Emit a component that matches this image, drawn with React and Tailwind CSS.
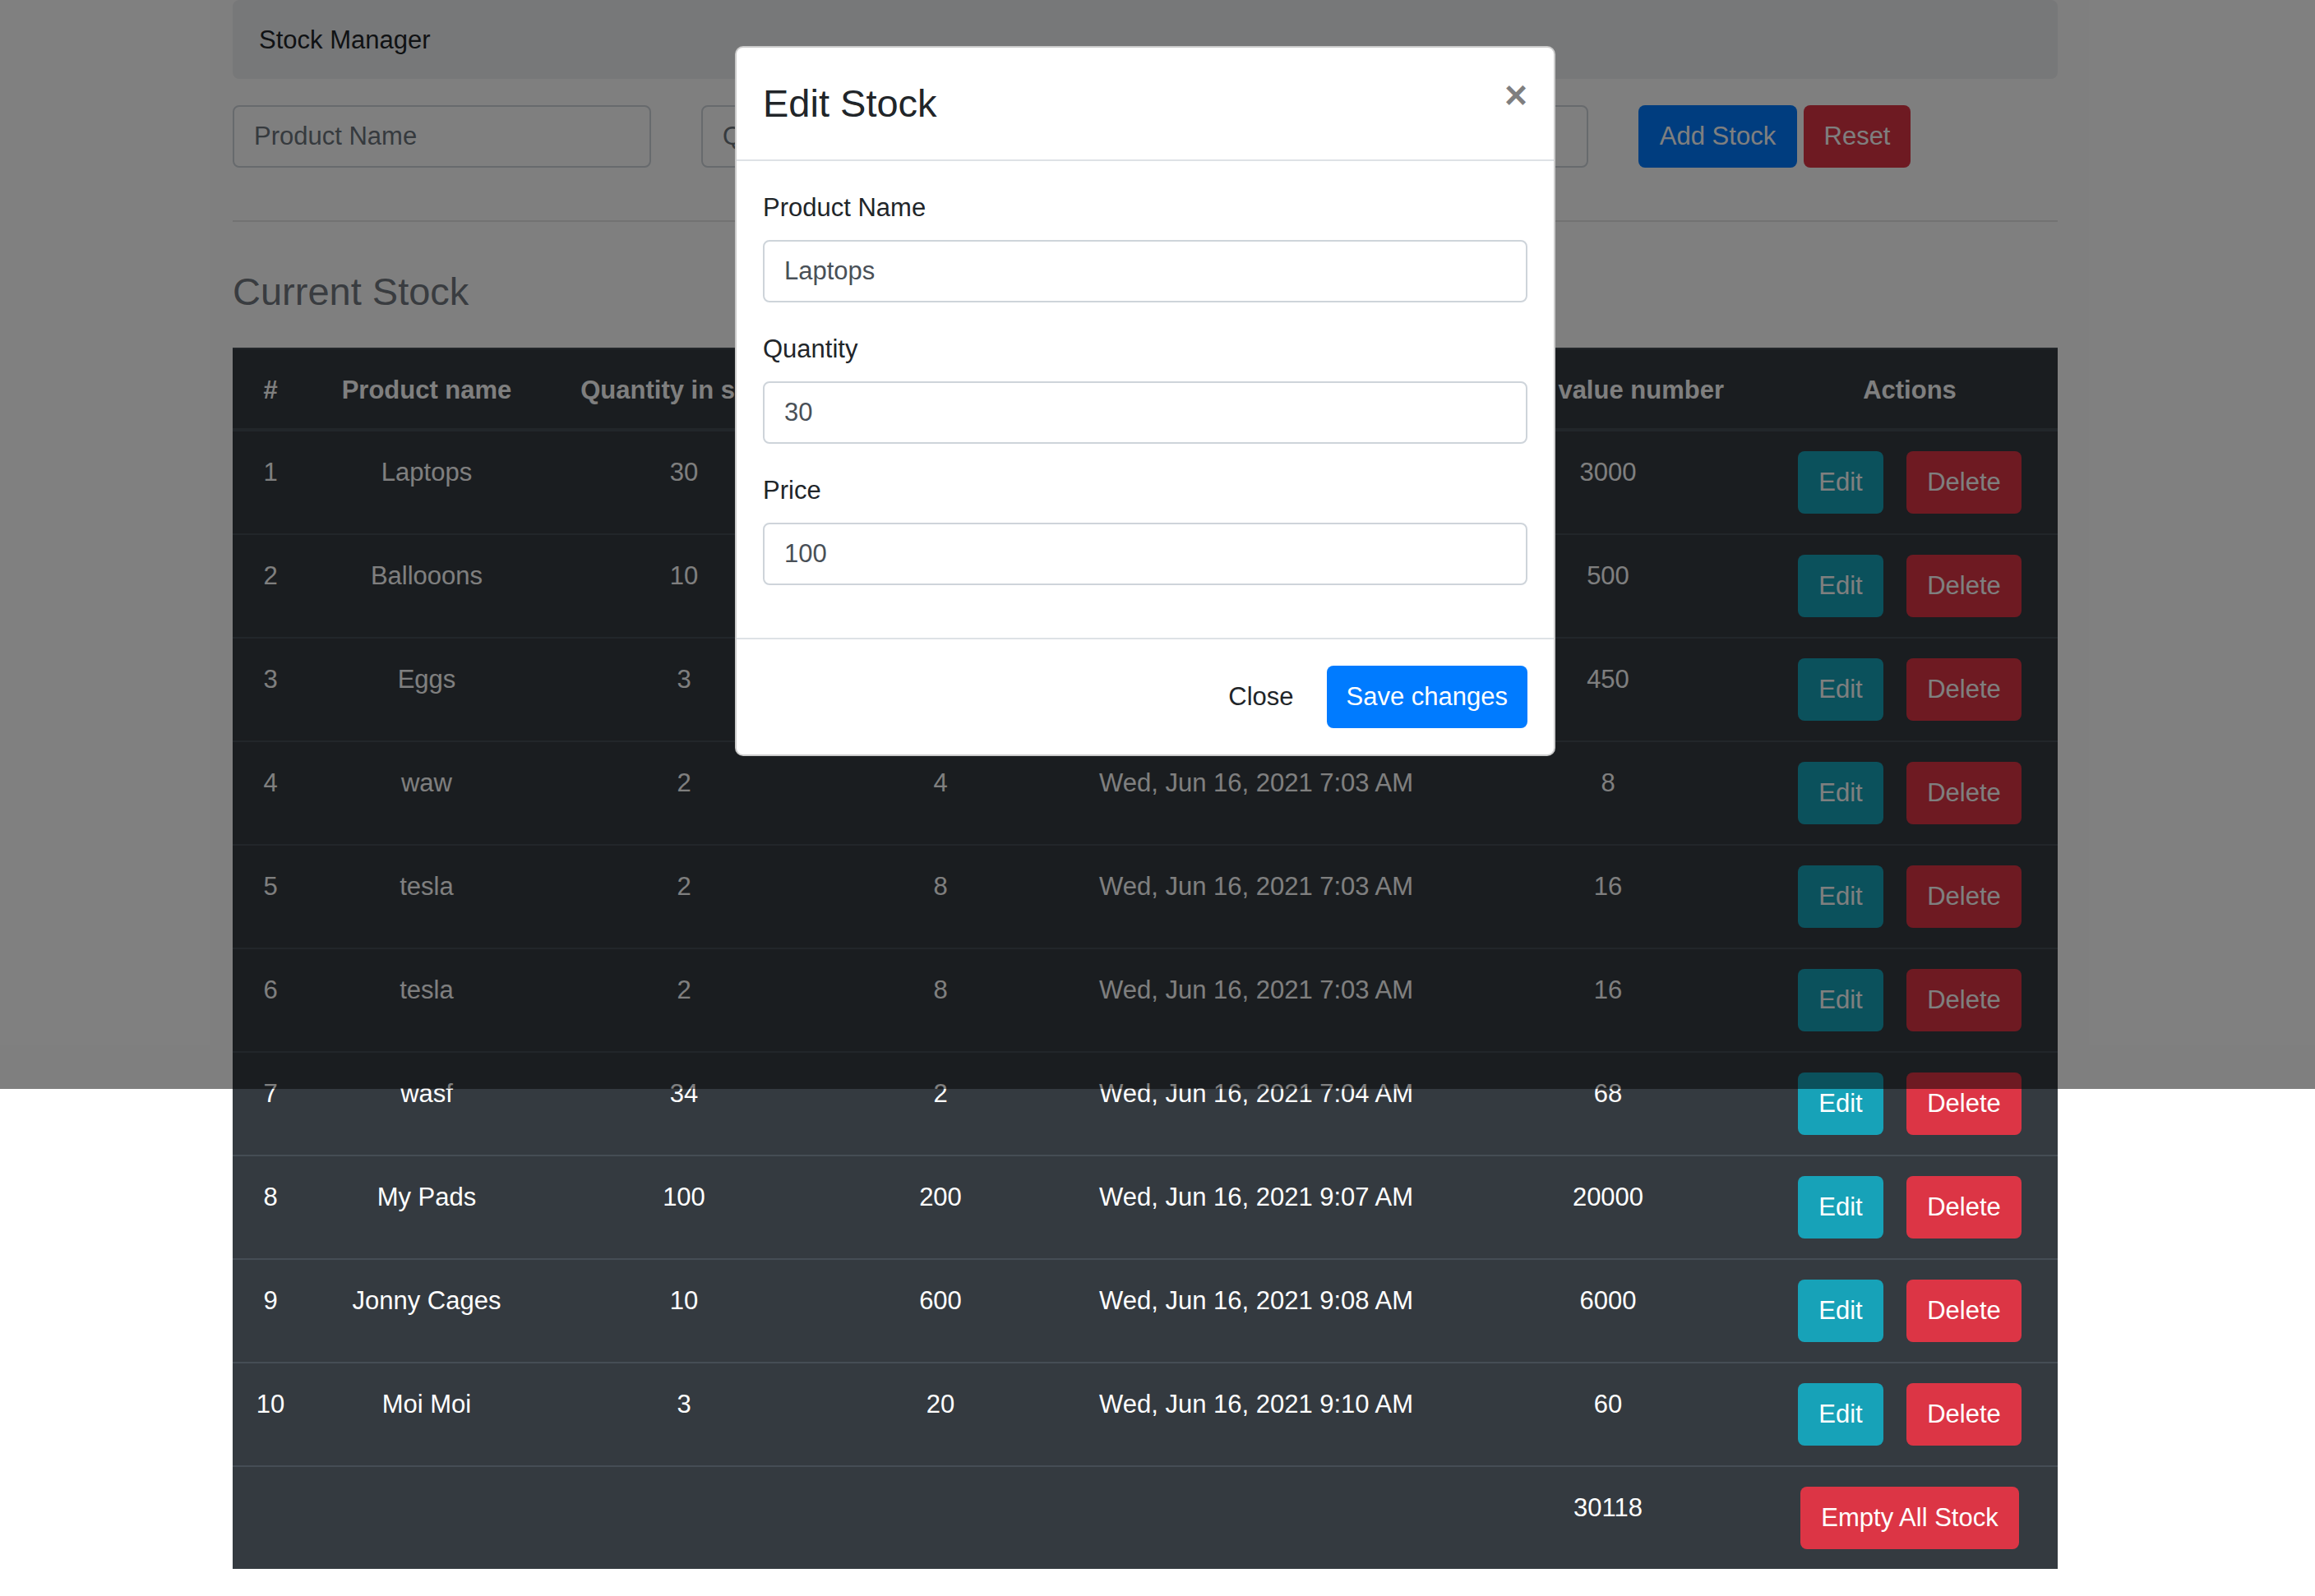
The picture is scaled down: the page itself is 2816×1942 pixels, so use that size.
import React from "react";

const ROWS = [
  [1, "Laptops", 30, 100, "Wed, Jun 16, 2021 7:02 AM", 3000],
  [2, "Ballooons", 10, 50, "Wed, Jun 16, 2021 7:02 AM", 500],
  [3, "Eggs", 3, 150, "Wed, Jun 16, 2021 7:03 AM", 450],
  [4, "waw", 2, 4, "Wed, Jun 16, 2021 7:03 AM", 8],
  [5, "tesla", 2, 8, "Wed, Jun 16, 2021 7:03 AM", 16],
  [6, "tesla", 2, 8, "Wed, Jun 16, 2021 7:03 AM", 16],
  [7, "wasf", 34, 2, "Wed, Jun 16, 2021 7:04 AM", 68],
  [8, "My Pads", 100, 200, "Wed, Jun 16, 2021 9:07 AM", 20000],
  [9, "Jonny Cages", 10, 600, "Wed, Jun 16, 2021 9:08 AM", 6000],
  [10, "Moi Moi", 3, 20, "Wed, Jun 16, 2021 9:10 AM", 60],
];

const HEADERS = ["#", "Product name", "Quantity in stock", "Price", "Date added", "Total value number", "Actions"];
const COL_WIDTHS = ["w-[92px]", "w-[288px]", "w-[338px]", "w-[286px]", "w-[482px]", "w-[374px]", "w-[360px]"];

function Btn({ className = "", children }) {
  return (
    <button
      type="button"
      className={`inline-flex h-[76px] items-center justify-center rounded-[8px] px-[24px] text-[31px] leading-[48px] ${className}`}
    >
      {children}
    </button>
  );
}

function PageInput({ placeholder }) {
  return (
    <input
      placeholder={placeholder}
      className="h-[76px] w-[509px] rounded-[8px] border-2 border-[#ced4da] bg-white px-[24px] text-[31px] text-[#495057] placeholder:text-[#6c757d] outline-none"
    />
  );
}

function Field({ label, value }) {
  return (
    <div className="mb-[32px]">
      <label className="mb-[16px] block pt-[1px] text-[31px] leading-[47px] text-[#212529]">{label}</label>
      <input
        readOnly
        value={value}
        className="block h-[76px] w-full rounded-[8px] border-2 border-[#ced4da] bg-white px-[24px] text-[31px] text-[#495057] outline-none"
      />
    </div>
  );
}

function EditModal() {
  return (
    <div className="absolute left-[894px] top-[56px] z-20 w-[998px] rounded-[10px] border-2 border-black/20 bg-white">
      <div className="flex items-start justify-between border-b-2 border-[#dee2e6] p-[32px]">
        <h5 className="text-[47px] font-medium leading-[72px] text-[#212529]">Edit Stock</h5>
        <button type="button" className="mt-[2px] text-[48px] font-bold leading-none text-black/50">
          ×
        </button>
      </div>
      <div className="p-[32px]">
        <Field label="Product Name" value="Laptops" />
        <Field label="Quantity" value="30" />
        <Field label="Price" value="100" />
      </div>
      <div className="flex items-center justify-end border-t-2 border-[#dee2e6] p-[24px]">
        <Btn className="m-[8px] text-[#212529]">Close</Btn>
        <Btn className="m-[8px] bg-[#007bff] text-white">Save changes</Btn>
      </div>
    </div>
  );
}

export default function App() {
  return (
    <div
      className="relative min-h-[1942px] w-[2816px] overflow-hidden bg-white text-[#212529]"
      style={{ fontFamily: '"Liberation Sans", Arial, sans-serif' }}
    >
      <div className="w-[2786px]">
        <div className="mx-auto w-[2220px]">
          <nav className="flex h-[96px] items-center rounded-[8px] bg-[#eff0f2] px-[32px] pt-[2px]">
            <span className="text-[31px] text-[#212529]">Stock Manager</span>
          </nav>

          <form className="mt-[32px] flex items-center gap-[61px]">
            <PageInput placeholder="Product Name" />
            <PageInput placeholder="Quantity" />
            <PageInput placeholder="Price" />
            <div className="flex gap-[8px]">
              <Btn className="w-[193px] bg-[#007bff] text-white">Add Stock</Btn>
              <Btn className="w-[130px] bg-[#dc3545] text-white">Reset</Btn>
            </div>
          </form>

          <hr className="mt-[64px] h-[2px] border-0 bg-black/10" />

          <h4 className="mt-[57px] text-[47px] font-medium leading-[56px] text-[#737980]">Current Stock</h4>

          <table className="mt-[40px] w-full table-fixed border-collapse bg-[#343a40] text-center text-[31px] leading-[48px] text-white">
            <colgroup>
              {COL_WIDTHS.map((w, i) => (
                <col key={i} className={w} />
              ))}
            </colgroup>
            <thead>
              <tr>
                {HEADERS.map((h) => (
                  <th
                    key={h}
                    className="whitespace-nowrap border-t-2 border-b-4 border-[#454d55] px-[24px] pt-[26px] pb-[22px] align-bottom font-bold"
                  >
                    {h}
                  </th>
                ))}
              </tr>
            </thead>
            <tbody>
              {ROWS.map(([n, name, qty, price, date, total]) => (
                <tr key={n}>
                  <td className="border-t-2 border-[#454d55] px-[24px] pt-[26px] pb-[22px] align-top">{n}</td>
                  <td className="border-t-2 border-[#454d55] px-[24px] pt-[26px] pb-[22px] align-top">{name}</td>
                  <td className="border-t-2 border-[#454d55] px-[24px] pt-[26px] pb-[22px] align-top">{qty}</td>
                  <td className="border-t-2 border-[#454d55] px-[24px] pt-[26px] pb-[22px] align-top">{price}</td>
                  <td className="whitespace-nowrap border-t-2 border-[#454d55] px-[24px] pt-[26px] pb-[22px] align-top">{date}</td>
                  <td className="border-t-2 border-[#454d55] px-[24px] pt-[26px] pb-[22px] align-top">{total}</td>
                  <td className="border-t-2 border-[#454d55] p-[24px] align-top">
                    <div className="flex justify-center gap-[28px]">
                      <Btn className="w-[104px] bg-[#17a2b8] text-white">Edit</Btn>
                      <Btn className="w-[140px] bg-[#dc3545] text-white">Delete</Btn>
                    </div>
                  </td>
                </tr>
              ))}
              <tr>
                <td className="border-t-2 border-[#454d55] p-[24px]" colSpan={5} />
                <td className="border-t-2 border-[#454d55] px-[24px] pt-[26px] pb-[22px] align-top">30118</td>
                <td className="border-t-2 border-[#454d55] p-[24px] align-top">
                  <div className="flex justify-center">
                    <Btn className="w-[266px] bg-[#dc3545] text-white">Empty All Stock</Btn>
                  </div>
                </td>
              </tr>
            </tbody>
          </table>
        </div>
      </div>

      <div className="absolute left-0 top-0 z-10 h-[1325px] w-full bg-black/50" />
      <EditModal />
    </div>
  );
}
